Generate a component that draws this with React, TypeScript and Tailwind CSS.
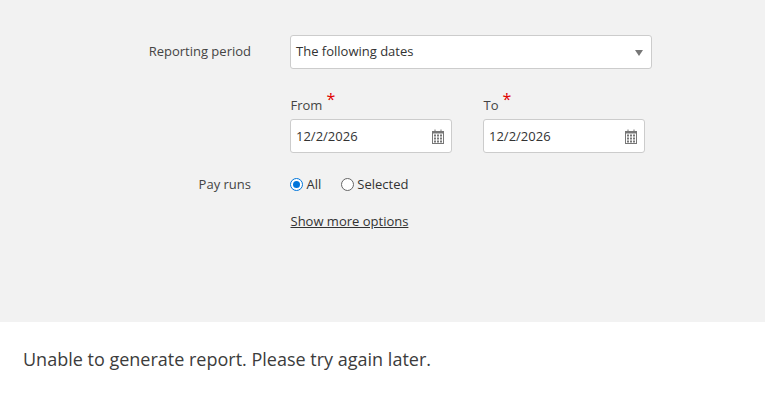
function CalendarIcon() {
  return (
    <svg width="12" height="15" viewBox="0 0 12 15" className="shrink-0 text-[#777777]">
      <path fill="currentColor" fillRule="evenodd" d="M0 2h2.5V0.5h1V2h5V0.5h1V2H12v13H0V2zM1 4.5v9.5h10V4.5H1z" />
      {[5.5, 8.5, 11.5].map((y) =>
        [2, 5, 8].map((x) => <rect key={`${x}-${y}`} x={x} y={y} width="2" height="2" fill="currentColor" />)
      )}
    </svg>
  );
}

function DateField({ label, value }: { label: string; value: string }) {
  return (
    <div className="w-[162px]">
      <div className="flex h-[34px] items-start text-[13px] text-[#444444]">
        <span className="ml-[0.5px] mt-[10px] leading-[20px]">{label}</span>
        <span className="ml-[4px] mt-[4px] text-[16px] leading-[20px] text-[#e00000]">*</span>
      </div>
      <div className="flex h-[34px] items-center justify-between rounded-[3px] border border-[#cccccc] bg-white pl-[5px] pr-[7px] text-[13px] text-[#333333]">
        <span className="pt-[1px]">{value}</span>
        <CalendarIcon />
      </div>
    </div>
  );
}

function Radio({ label, checked }: { label: string; checked?: boolean }) {
  return (
    <label className="flex items-center gap-[3.5px] text-[13px] text-[#333333]">
      <span
        className={
          checked
            ? 'flex h-[13px] w-[13px] items-center justify-center rounded-full border border-[#0075db] bg-white'
            : 'flex h-[13px] w-[13px] items-center justify-center rounded-full border border-[#666666] bg-white'
        }
      >
        {checked && <span className="h-[7px] w-[7px] rounded-full bg-[#0075db]" />}
      </span>
      <span className="pt-[1px]">{label}</span>
    </label>
  );
}

export default function App() {
  return (
    <div className="h-[403px] w-[765px] overflow-hidden bg-white font-['Open_Sans',sans-serif]">
      <section className="h-[322px] bg-[#f2f2f2] pt-[35px]">
        <div className="flex items-center">
          <div className="w-[251px] text-right text-[13px] text-[#444444]">Reporting period</div>
          <div className="ml-[39px] flex h-[34px] w-[362px] items-center justify-between rounded-[3px] border border-[#cccccc] bg-white pl-[5px] pr-[8px] text-[13px] text-[#333333]">
            <span>The following dates</span>
            <span className="mt-[1px] h-0 w-0 border-x-[4px] border-t-[6px] border-x-transparent border-t-[#777777]" />
          </div>
        </div>

        <div className="ml-[290px] mt-[16px] flex gap-[31px]">
          <DateField label="From" value="12/2/2026" />
          <DateField label="To" value="12/2/2026" />
        </div>

        <div className="mt-[21px] flex h-[20px] items-center">
          <div className="w-[251px] pt-[1px] text-right text-[13px] text-[#444444]">Pay runs</div>
          <div className="ml-[39px] flex items-center gap-[19.5px]">
            <Radio label="All" checked />
            <Radio label="Selected" />
          </div>
        </div>

        <a href="#" className="ml-[290.5px] mt-[17px] block w-fit text-[13px] leading-[20px] text-[#333333] underline">
          Show more options
        </a>
      </section>

      <p className="pl-[23px] pt-[24px] text-[18px] leading-[26px] text-[#3c3c3c]">
        Unable to generate report. Please try again later.
      </p>
    </div>
  );
}
